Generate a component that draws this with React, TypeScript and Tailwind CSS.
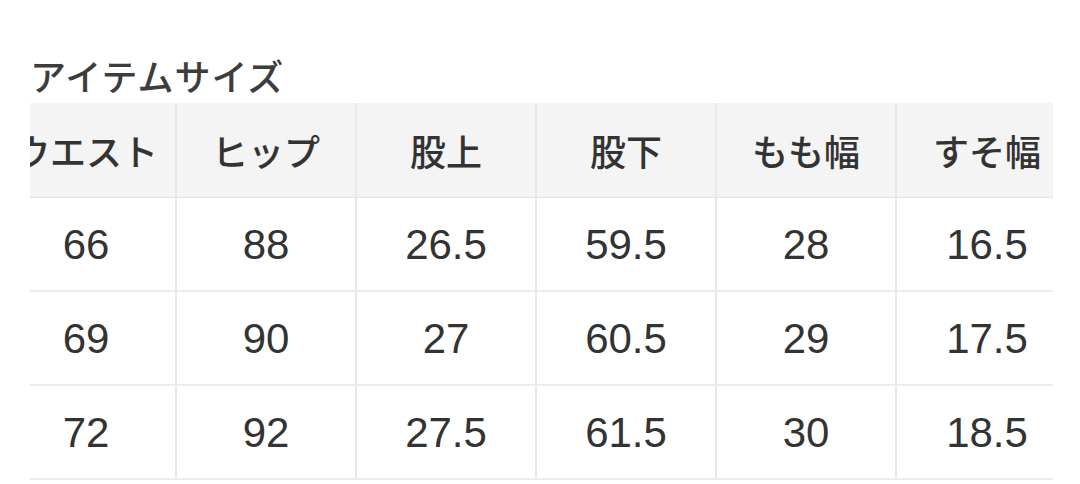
import React from "react";

const headers = ["ウエスト", "ヒップ", "股上", "股下", "もも幅", "すそ幅"];
const rows = [
  ["66", "88", "26.5", "59.5", "28", "16.5"],
  ["69", "90", "27", "60.5", "29", "17.5"],
  ["72", "92", "27.5", "61.5", "30", "18.5"],
];

export default function App() {
  return (
    <div className="w-[1080px] h-[484px] bg-white overflow-hidden" style={{ fontFamily: '"Liberation Sans", "Noto Sans CJK JP", sans-serif' }}>
      <div className="pl-[30px] pt-[54px]">
        <div className="h-[42px] leading-[42px] text-[36px] font-medium text-[#3d3d3d] tracking-[1px]" style={{ fontFamily: '"Noto Sans CJK JP", sans-serif' }}>
          アイテムサイズ
        </div>
        <div className="mt-[7px] w-[1023px] overflow-hidden">
          <div className="-ml-[33px] w-[1080px]">
            <div className="flex bg-[#f4f4f4] h-[95px] border-b border-[#e2e2e2]">
              {headers.map((h, i) => (
                <div
                  key={i}
                  className={`w-[180px] shrink-0 flex items-center justify-center text-[36px] font-medium text-[#333] ${i < headers.length - 1 ? "border-r-2 border-[#e8e8e8]" : ""}`}
                  style={{ fontFamily: '"Noto Sans CJK JP", sans-serif' }}
                >
                  {h}
                </div>
              ))}
            </div>
            {rows.map((r, ri) => (
              <div key={ri} className="flex h-[94px] border-b-2 border-[#ebebeb]">
                {r.map((v, ci) => (
                  <div
                    key={ci}
                    className={`w-[180px] shrink-0 flex items-center justify-center text-[42px] text-[#333] ${ci < r.length - 1 ? "border-r-2 border-[#e8e8e8]" : ""}`}
                  >
                    {v}
                  </div>
                ))}
              </div>
            ))}
          </div>
        </div>
      </div>
    </div>
  );
}
